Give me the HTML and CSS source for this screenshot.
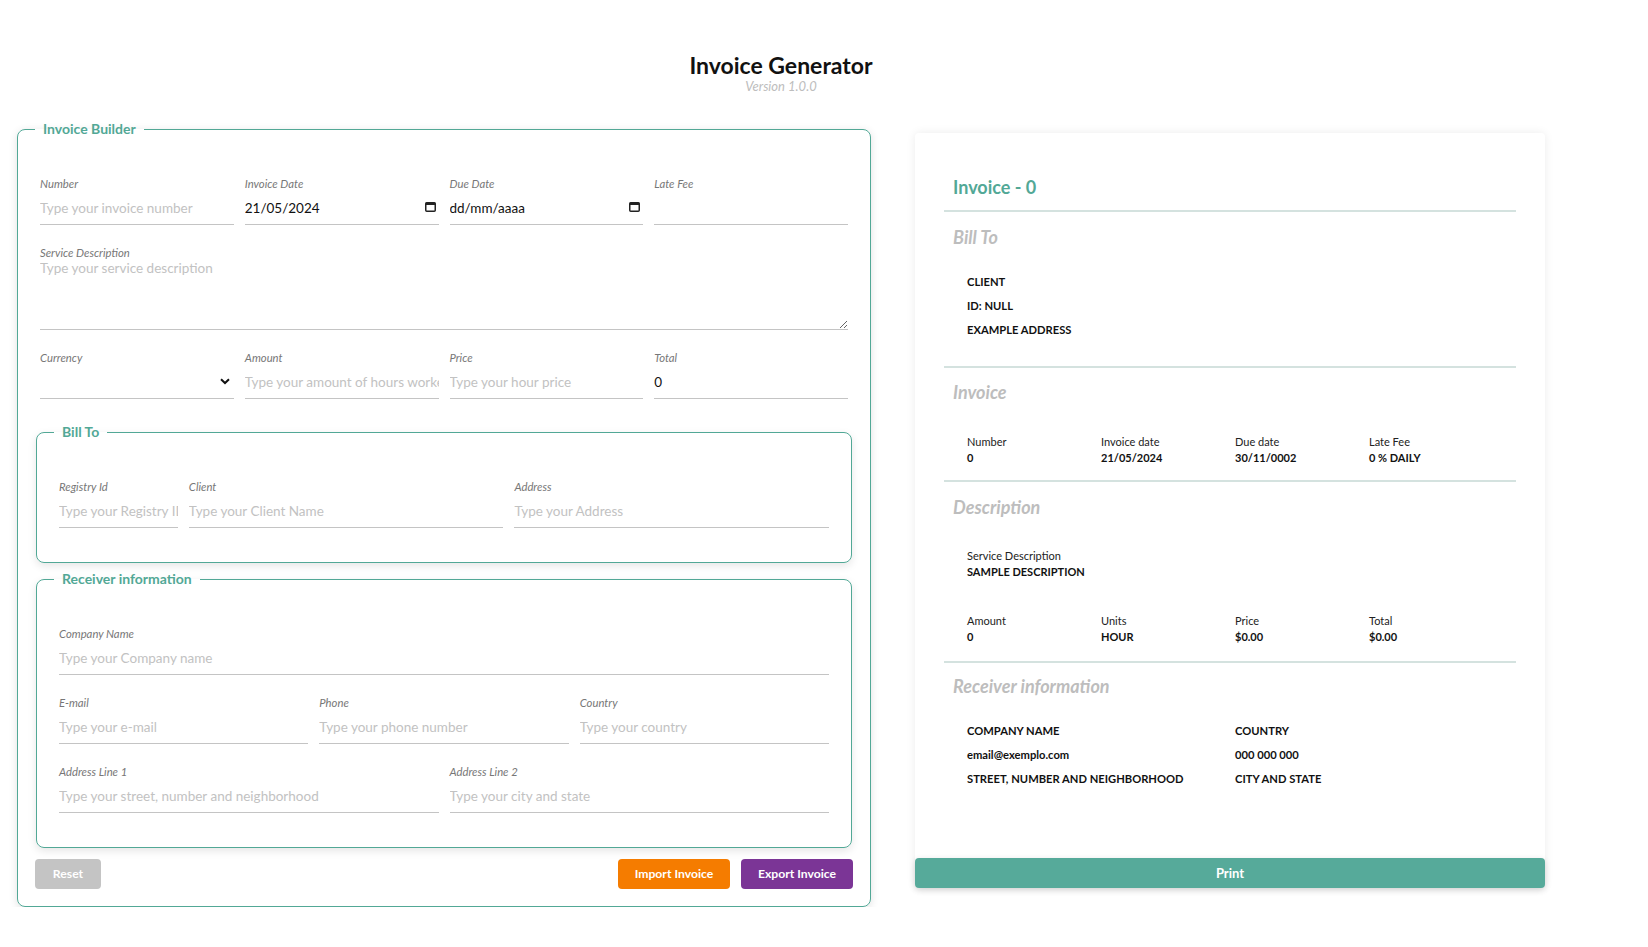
FILE: index.html
```html
<!DOCTYPE html>
<html lang="en">
<head>
<meta charset="utf-8">
<title>Invoice Generator</title>
<link rel="stylesheet" href="styles.css">
</head>
<body>
<div class="app">
  <header class="header">
    <h1 class="title">Invoice Generator</h1>
    <p class="version">Version 1.0.0</p>
  </header>
  <main class="columns">
    <form class="builder">
      <fieldset class="panel">
        <legend class="legend legend-main">Invoice Builder</legend>
        <div class="row row-4">
          <div class="field"><label class="label">Number</label><div class="control"><input class="input" type="text" placeholder="Type your invoice number"></div></div>
          <div class="field"><label class="label">Invoice Date</label><div class="control"><input class="input" type="text" value="21/05/2024"><svg class="cal" width="11" height="11" viewBox="0 0 11 11"><rect x="0.75" y="1.75" width="9.5" height="8.5" rx="1" fill="none" stroke="#222" stroke-width="1.5"/><rect x="0.75" y="1.5" width="9.5" height="2.5" fill="#222"/></svg></div></div>
          <div class="field"><label class="label">Due Date</label><div class="control"><input class="input" type="text" value="dd/mm/aaaa"><svg class="cal" width="11" height="11" viewBox="0 0 11 11"><rect x="0.75" y="1.75" width="9.5" height="8.5" rx="1" fill="none" stroke="#222" stroke-width="1.5"/><rect x="0.75" y="1.5" width="9.5" height="2.5" fill="#222"/></svg></div></div>
          <div class="field"><label class="label">Late Fee</label><div class="control"><input class="input" type="text"></div></div>
        </div>
        <div class="row row-1">
          <div class="field"><label class="label">Service Description</label><textarea class="textarea" placeholder="Type your service description"></textarea></div>
        </div>
        <div class="row row-4 row-last">
          <div class="field"><label class="label">Currency</label><div class="control"><select class="select"><option></option></select><svg class="chev" width="10" height="7" viewBox="0 0 10 7"><polyline points="1,1.2 5,5 9,1.2" fill="none" stroke="#111" stroke-width="2"/></svg></div></div>
          <div class="field"><label class="label">Amount</label><div class="control"><input class="input" type="text" placeholder="Type your amount of hours worked"></div></div>
          <div class="field"><label class="label">Price</label><div class="control"><input class="input" type="text" placeholder="Type your hour price"></div></div>
          <div class="field"><label class="label">Total</label><div class="control"><input class="input" type="text" value="0"></div></div>
        </div>

        <fieldset class="sub sub-bill">
          <legend class="legend">Bill To</legend>
          <div class="grid grid-bill">
            <div class="field"><label class="label">Registry Id</label><div class="control"><input class="input" type="text" placeholder="Type your Registry ID"></div></div>
            <div class="field"><label class="label">Client</label><div class="control"><input class="input" type="text" placeholder="Type your Client Name"></div></div>
            <div class="field"><label class="label">Address</label><div class="control"><input class="input" type="text" placeholder="Type your Address"></div></div>
          </div>
        </fieldset>

        <fieldset class="sub sub-receiver">
          <legend class="legend">Receiver information</legend>
          <div class="grid grid-1">
            <div class="field"><label class="label">Company Name</label><div class="control"><input class="input" type="text" placeholder="Type your Company name"></div></div>
          </div>
          <div class="grid grid-3">
            <div class="field"><label class="label">E-mail</label><div class="control"><input class="input" type="text" placeholder="Type your e-mail"></div></div>
            <div class="field"><label class="label">Phone</label><div class="control"><input class="input" type="text" placeholder="Type your phone number"></div></div>
            <div class="field"><label class="label">Country</label><div class="control"><input class="input" type="text" placeholder="Type your country"></div></div>
          </div>
          <div class="grid grid-2">
            <div class="field"><label class="label">Address Line 1</label><div class="control"><input class="input" type="text" placeholder="Type your street, number and neighborhood"></div></div>
            <div class="field"><label class="label">Address Line 2</label><div class="control"><input class="input" type="text" placeholder="Type your city and state"></div></div>
          </div>
        </fieldset>

        <div class="actions">
          <button class="btn btn-reset" type="button">Reset</button>
          <div class="actions-right">
            <button class="btn btn-import" type="button">Import Invoice</button>
            <button class="btn btn-export" type="button">Export Invoice</button>
          </div>
        </div>
      </fieldset>
    </form>

    <section class="preview">
      <div class="preview-body">
        <h2 class="inv-title">Invoice - 0</h2>
        <div class="sec sec-bill">
          <h3 class="sec-title">Bill To</h3>
          <div class="lines">
            <p class="line">CLIENT</p>
            <p class="line">ID: NULL</p>
            <p class="line">EXAMPLE ADDRESS</p>
          </div>
        </div>
        <div class="sec sec-invoice">
          <h3 class="sec-title">Invoice</h3>
          <div class="cols4">
            <div><p class="k">Number</p><p class="v">0</p></div>
            <div><p class="k">Invoice date</p><p class="v">21/05/2024</p></div>
            <div><p class="k">Due date</p><p class="v">30/11/0002</p></div>
            <div><p class="k">Late Fee</p><p class="v">0 % DAILY</p></div>
          </div>
        </div>
        <div class="sec sec-desc">
          <h3 class="sec-title">Description</h3>
          <div class="desc">
            <p class="k">Service Description</p><p class="v">SAMPLE DESCRIPTION</p>
          </div>
          <div class="cols4">
            <div><p class="k">Amount</p><p class="v">0</p></div>
            <div><p class="k">Units</p><p class="v">HOUR</p></div>
            <div><p class="k">Price</p><p class="v">$0.00</p></div>
            <div><p class="k">Total</p><p class="v">$0.00</p></div>
          </div>
        </div>
        <div class="sec sec-receiver">
          <h3 class="sec-title">Receiver information</h3>
          <div class="cols2">
            <p class="line">COMPANY NAME</p>
            <p class="line">COUNTRY</p>
            <p class="line line-plain">email@exemplo.com</p>
            <p class="line">000 000 000</p>
            <p class="line">STREET, NUMBER AND NEIGHBORHOOD</p>
            <p class="line">CITY AND STATE</p>
          </div>
        </div>
      </div>
      <button class="print" type="button">Print</button>
    </section>
  </main>
</div>
</body>
</html>
```

FILE: styles.css
```css
* { box-sizing: border-box; }

body {
  margin: 0;
  background: #fff;
  color: #111;
  font-family: Lato, "Noto Sans", sans-serif;
}

.app {
  width: 1562px;
  padding: 0 17px;
}

.header {
  height: 120px;
  padding-top: 52px;
  text-align: center;
}

.title {
  margin: 0;
  font-size: 23px;
  line-height: 26px;
  font-weight: 700;
  color: #111;
}

.version {
  margin: 0;
  font-size: 13px;
  line-height: 16px;
  font-style: italic;
  color: #bdbdbd;
}

.columns {
  display: flex;
  align-items: flex-start;
  gap: 44px;
}

.builder { width: 854px; flex: none; }

.panel {
  margin: 0;
  min-width: 0;
  border: 1px solid #52a896;
  border-radius: 8px;
  padding: 39px 17px 17px;
  box-shadow: 0 2px 8px rgba(0, 0, 0, 0.12);
}

.legend {
  padding: 0 8px;
  margin-left: -5px;
  font-size: 14px;
  line-height: 18px;
  font-weight: 700;
  color: #52a896;
}
.legend-main { margin-left: 0; }

.row {
  display: grid;
  gap: 11px;
  padding: 0 5px;
  margin-bottom: 21px;
}
.row-4 { grid-template-columns: repeat(4, 1fr); }
.row-1 { grid-template-columns: 1fr; }
.row-last { margin-bottom: 24px; }

.field { display: flex; flex-direction: column; min-width: 0; }

.label {
  font-size: 11.3px;
  line-height: 14px;
  font-style: italic;
  color: #777;
}

.control {
  display: flex;
  align-items: center;
  height: 34px;
  border-bottom: 1px solid #c4c4c4;
}

.input, .select, .textarea {
  font-family: inherit;
  font-size: 13.5px;
  color: #111;
  background: transparent;
  border: none;
  outline: none;
  padding: 0;
  margin: 0;
}

.input {
  flex: 1;
  min-width: 0;
  height: 100%;
}

.input::placeholder, .textarea::placeholder { color: #c2c2c2; opacity: 1; }

.cal { flex: none; margin: 0 3px 3px 6px; }

.select {
  flex: 1;
  min-width: 0;
  height: 100%;
  appearance: none;
  -webkit-appearance: none;
}

.chev { flex: none; margin: 0 4px 0 6px; }

.textarea {
  display: block;
  width: 100%;
  height: 70px;
  line-height: 16px;
  border-bottom: 1px solid #c4c4c4;
  resize: vertical;
}

.sub {
  margin: 0 1px;
  min-width: 0;
  border: 1px solid #52a896;
  border-radius: 8px;
  padding: 39px 22px 34px;
  box-shadow: 0 3px 8px rgba(0, 0, 0, 0.1);
}

.sub-receiver { margin-top: 7px; }

.grid { display: grid; gap: 11px; }
.grid + .grid { margin-top: 21px; }
.grid-bill { grid-template-columns: 119fr 315fr 315fr; }
.grid-1 { grid-template-columns: 1fr; }
.grid-3 { grid-template-columns: repeat(3, 1fr); }
.grid-2 { grid-template-columns: repeat(2, 1fr); }

.actions {
  display: flex;
  justify-content: space-between;
  margin-top: 11px;
}

.actions-right { display: flex; gap: 11px; }

.btn {
  height: 30px;
  padding: 0 0 2px;
  border: none;
  border-radius: 4px;
  font-family: inherit;
  font-size: 12.2px;
  font-weight: 700;
  color: #fff;
  cursor: pointer;
}
.btn-reset { width: 66px; background: #c4c4c4; }
.btn-import { width: 112px; background: #f57c00; }
.btn-export { width: 112px; background: #7b3596; }

/* preview */
.preview {
  width: 630px;
  flex: none;
  margin-top: 13px;
  background: #fff;
  border-radius: 4px;
  box-shadow: 0 0 10px rgba(0, 0, 0, 0.08);
}

.preview-body {
  height: 725px;
  padding: 43px 29px 0;
}

.inv-title {
  margin: 0;
  padding-left: 9px;
  padding-bottom: 12px;
  border-bottom: 2px solid #d4e2df;
  font-size: 18px;
  line-height: 22px;
  font-weight: 700;
  color: #52a896;
}

.sec { border-bottom: 2px solid #d4e2df; }
.sec-receiver { border-bottom: none; }

.sec-title {
  margin: 0;
  padding-left: 9px;
  font-size: 18px;
  line-height: 20px;
  font-weight: 700;
  font-style: italic;
  color: #bdbdbd;
}

.sec-bill { padding: 15px 0 24px; }
.sec-invoice { padding: 14px 0 14px; }
.sec-desc { padding: 15px 0 16px; }
.sec-receiver { padding: 13px 0 0; }

.lines { padding: 23px 0 0 23px; }

.line {
  margin: 0;
  font-size: 11.2px;
  line-height: 24px;
  font-weight: 700;
  color: #111;
}

.cols4 {
  display: grid;
  grid-template-columns: repeat(4, 134px);
  padding-left: 23px;
}
.sec-invoice .cols4 { margin-top: 32px; }
.sec-desc .cols4 { margin-top: 33px; }

.desc { padding: 31px 0 0 23px; }

.k {
  margin: 0;
  font-size: 11px;
  line-height: 16px;
  color: #222;
}

.v {
  margin: 0;
  font-size: 11px;
  line-height: 16px;
  font-weight: 700;
  color: #111;
}

.cols2 {
  display: grid;
  grid-template-columns: repeat(2, 268px);
  padding: 23px 0 0 23px;
}

.print {
  display: block;
  width: 100%;
  height: 30px;
  border: none;
  border-radius: 4px;
  background: #56aa9a;
  color: #fff;
  font-family: inherit;
  font-size: 13px;
  font-weight: 700;
  box-shadow: 0 2px 6px rgba(0, 0, 0, 0.15);
}
```
